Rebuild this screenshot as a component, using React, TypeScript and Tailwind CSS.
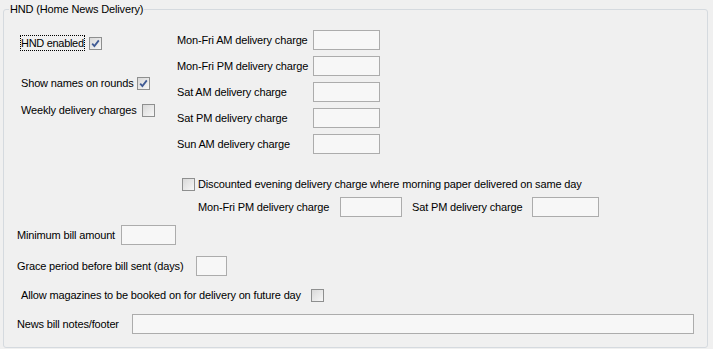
import React from "react"

function Check({ checked }: { checked?: boolean }) {
    return (
        <span className="flex w-[13px] h-[13px] shrink-0 border border-[#8e8f8f] bg-linear-to-br from-[#d9d9d9] to-[#f7f7f7]">
            {checked && (
                <svg width="11" height="11" viewBox="0 0 11 11">
                    <path d="M2.2 5.6 L4.4 8 L8.8 2.4" fill="none" stroke="#3f5a94" strokeWidth="1.8" />
                </svg>
            )}
        </span>
    )
}

function Field({ w }: { w: string }) {
    return <div className={`${w} h-[20px] shrink-0 bg-[#f7f7f7] border border-[#acacac]`} />
}

const charges = [
    "Mon-Fri AM delivery charge",
    "Mon-Fri PM delivery charge",
    "Sat AM delivery charge",
    "Sat PM delivery charge",
    "Sun AM delivery charge",
]

export default function App() {
    return (
        <div className="w-[713px] h-[349px] bg-[#f0f0f0] pt-[9px] pl-[3px] text-black text-[11px] leading-[13px] tracking-[-0.15px] whitespace-nowrap font-['Liberation_Sans',Arial,sans-serif]">
            <div className="relative w-[705px] h-[339px] border border-[#d5dadf] rounded-[3px]">
                <span className="absolute left-[5px] top-[-7px] px-[1px] bg-[#f0f0f0]">HND (Home News Delivery)</span>

                <div className="flex flex-col">
                    {/* top block */}
                    <div className="flex pt-[20px]">
                        <div className="w-[173px] pl-[16px] flex flex-col">
                            <div className="mt-[5px] h-[16px] flex items-center">
                                <span className="h-[16px] flex items-center border border-dotted border-black tracking-[-0.3px]">HND enabled</span>
                                <span className="ml-[4px]"><Check checked /></span>
                            </div>
                            <div className="mt-[26px] h-[13px] pl-[1px] flex items-center">
                                <span className="w-[116px]">Show names on rounds</span>
                                <Check checked />
                            </div>
                            <div className="mt-[14px] h-[13px] pl-[1px] flex items-center">
                                <span className="w-[121px]">Weekly delivery charges</span>
                                <Check />
                            </div>
                        </div>
                        <div className="flex flex-col gap-[6px]">
                            {charges.map((c) => (
                                <div key={c} className="h-[20px] flex items-center">
                                    <span className="w-[136px]">{c}</span>
                                    <Field w="w-[67px]" />
                                </div>
                            ))}
                        </div>
                    </div>

                    {/* discounted evening */}
                    <div className="mt-[24px] pl-[178px] h-[13px] flex items-center">
                        <Check />
                        <span className="ml-[3px]">Discounted evening delivery charge where morning paper delivered on same day</span>
                    </div>
                    <div className="mt-[6px] pl-[194px] h-[20px] flex items-center">
                        <span className="w-[142px]">Mon-Fri PM delivery charge</span>
                        <Field w="w-[62px]" />
                        <span className="ml-[10px] w-[120px]">Sat PM delivery charge</span>
                        <Field w="w-[67px]" />
                    </div>

                    {/* billing */}
                    <div className="mt-[8px] pl-[13px] h-[20px] flex items-center">
                        <span className="w-[104px]">Minimum bill amount</span>
                        <Field w="w-[55px]" />
                    </div>
                    <div className="mt-[11px] pl-[13px] h-[20px] flex items-center">
                        <span className="w-[179px]">Grace period before bill sent (days)</span>
                        <Field w="w-[31px]" />
                    </div>
                    <div className="mt-[13px] pl-[17px] h-[13px] flex items-center">
                        <span className="w-[290px]">Allow magazines to be booked on for delivery on future day</span>
                        <Check />
                    </div>
                    <div className="mt-[12px] pl-[13px] h-[20px] flex items-center">
                        <span className="w-[115px]">News bill notes/footer</span>
                        <Field w="w-[562px]" />
                    </div>
                </div>
            </div>
        </div>
    )
}
